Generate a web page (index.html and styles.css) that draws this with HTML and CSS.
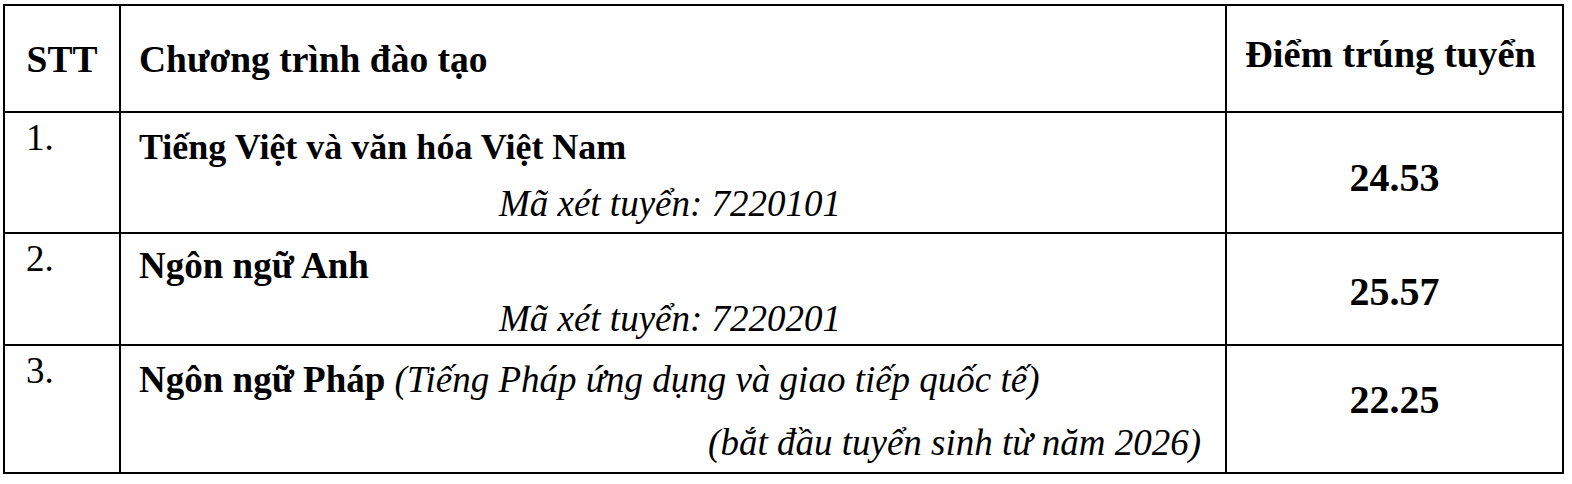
FILE: index.html
```
<!DOCTYPE html>
<html lang="vi">
<head>
<meta charset="utf-8">
<title>Điểm trúng tuyển</title>
<link rel="stylesheet" href="styles.css">
</head>
<body>
<table class="scores">
  <colgroup>
    <col class="c-stt">
    <col class="c-prog">
    <col class="c-score">
  </colgroup>
  <thead>
    <tr class="head">
      <th class="stt">STT</th>
      <th class="prog">Chương trình đào tạo</th>
      <th class="score">Điểm trúng tuyển</th>
    </tr>
  </thead>
  <tbody>
    <tr class="r1">
      <td class="num">1.</td>
      <td class="prog">
        <div class="title">Tiếng Việt và văn hóa Việt Nam</div>
        <div class="code center">Mã xét tuyển: 7220101</div>
      </td>
      <td class="val">24.53</td>
    </tr>
    <tr class="r2">
      <td class="num">2.</td>
      <td class="prog">
        <div class="title">Ngôn ngữ Anh</div>
        <div class="code center">Mã xét tuyển: 7220201</div>
      </td>
      <td class="val">25.57</td>
    </tr>
    <tr class="r3">
      <td class="num">3.</td>
      <td class="prog">
        <div class="title">Ngôn ngữ Pháp <em>(Tiếng Pháp ứng dụng và giao tiếp quốc tế)</em></div>
        <div class="code right">(bắt đầu tuyển sinh từ năm 2026)</div>
      </td>
      <td class="val">22.25</td>
    </tr>
  </tbody>
</table>
</body>
</html>
```
FILE: styles.css
```
html, body {
  margin: 0;
  padding: 0;
  background: #ffffff;
}

body {
  font-family: "Liberation Serif", "Times New Roman", serif;
  font-size: 37px;
  color: #000;
}

.scores {
  margin: 4px 0 0 3px;
  width: 1559px;
  table-layout: fixed;
  border-collapse: collapse;
  border: 2.5px solid #000;
}

.c-stt { width: 116px; }
.c-prog { width: 1106px; }
.c-score { width: 337px; }

.scores th,
.scores td {
  border: 2.5px solid #000;
  padding: 0;
  line-height: 1.15;
}

.head {
  height: 107px;
}

.head th {
  font-weight: bold;
  font-size: 37.5px;
  vertical-align: middle;
  padding-top: 2px;
}

.head .stt {
  text-align: center;
}

.head .prog {
  text-align: left;
  padding-left: 18px;
}

.head .score {
  text-align: center;
  font-size: 38.5px;
  padding-top: 0;
  padding-bottom: 8px;
  padding-left: 0;
  padding-right: 8px;
}

.scores td {
  vertical-align: top;
}

.num {
  padding-left: 21px !important;
  padding-top: 4px !important;
}

.prog {
  padding-left: 18px !important;
  padding-right: 24px !important;
}

.r1 { height: 121px; }
.r2 { height: 112px; }
.r3 { height: 128px; }

.r1 .prog { padding-top: 14px !important; }
.r2 .prog { padding-top: 11px !important; }
.r3 .prog { padding-top: 13px !important; }

.title {
  font-weight: bold;
}

.r1 .title {
  font-size: 36px;
}

.title em {
  font-weight: normal;
  font-style: italic;
}

.code {
  font-style: italic;
  margin-top: 15px;
}

.r2 .code { margin-top: 10px; }
.r3 .code { margin-top: 20px; }

.center { text-align: center; }
.right { text-align: right; }

.scores td.val {
  vertical-align: middle;
  text-align: center;
  font-weight: bold;
  font-size: 40px;
}

.r1 td.val { padding-top: 11px; }
.r2 td.val { padding-top: 6px; }
.r3 td.val { padding-bottom: 18px; }
```
